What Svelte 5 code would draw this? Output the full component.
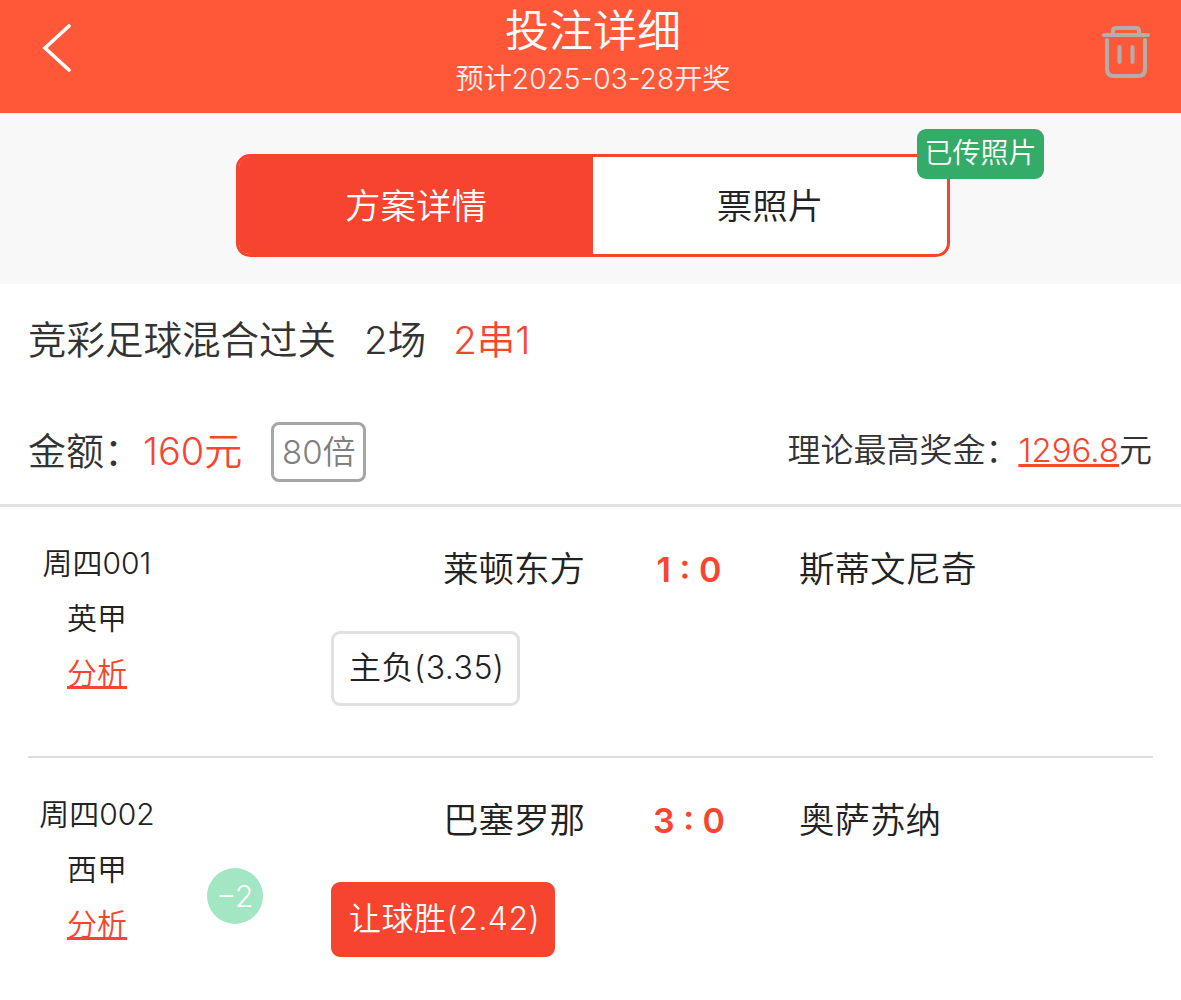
<script>
  const matches = [
    { no: '周四001', league: '英甲', home: '莱顿东方', score: '1 : 0', away: '斯蒂文尼奇', pick: '主负(3.35)', won: false, handicap: null },
    { no: '周四002', league: '西甲', home: '巴塞罗那', score: '3 : 0', away: '奥萨苏纳', pick: '让球胜(2.42)', won: true, handicap: '−2' }
  ];
</script>

<div class="page">
  <header class="topbar">
    <svg class="back" width="30" height="48" viewBox="0 0 30 48" aria-label="返回">
      <path d="M27 2 L3 24 L27 46" fill="none" stroke="#fff" stroke-width="3.6" stroke-linecap="round" stroke-linejoin="miter" />
    </svg>
    <div class="heading">
      <div class="title">投注详细</div>
      <div class="subtitle">预计2025-03-28开奖</div>
    </div>
    <svg class="trash" width="48" height="54" viewBox="0 0 48 54" aria-label="删除">
      <g fill="none" stroke="#b3adab" stroke-width="4" stroke-linecap="round">
        <path d="M2 10 H46" />
        <path d="M11 9 V6 Q11 3 14 3 H34 Q37 3 37 6 V9" />
        <path d="M5 15 V44 Q5 51 12 51 H36 Q43 51 43 44 V15" />
        <path d="M17.5 22 V37" />
        <path d="M30.5 22 V37" />
      </g>
    </svg>
  </header>

  <section class="tabs-wrap">
    <div class="tabs">
      <div class="tab active">方案详情</div>
      <div class="tab">票照片</div>
      <span class="badge">已传照片</span>
    </div>
  </section>

  <section class="summary">
    <div class="play">
      <span>竞彩足球混合过关</span>
      <span class="count">2场</span>
      <span class="red">2串1</span>
    </div>
    <div class="amount">
      <span class="label">金额：</span>
      <span class="red money">160元</span>
      <span class="times">80倍</span>
      <span class="prize">理论最高奖金：<u class="red">1296.8</u>元</span>
    </div>
  </section>

  {#each matches as m, i}
    <div class="match" class:first={i === 0}>
      <div class="info">
        <div>{m.no}</div>
        <div>{m.league}</div>
        <a class="link" href="#analysis">分析</a>
      </div>
      <div class="detail">
        <div class="teams">
          <span class="home">{m.home}</span>
          <span class="score">{m.score}</span>
          <span class="away">{m.away}</span>
        </div>
        <div class="pick" class:won={m.won}>{m.pick}</div>
      </div>
      {#if m.handicap}
        <span class="handicap">{m.handicap}</span>
      {/if}
    </div>
  {/each}
</div>

<style>
  :global(body) {
    margin: 0;
    background: #fff;
  }

  .page {
    width: 1181px;
    height: 1000px;
    overflow: hidden;
    font-family: Inter, "Noto Sans CJK SC", sans-serif;
    font-weight: 350;
    color: #333;
  }

  .red {
    color: #f7452f;
  }

  .topbar {
    height: 113px;
    background: #ff5839;
    display: flex;
    align-items: flex-start;
    justify-content: space-between;
    padding: 0 31px 0 42px;
    box-sizing: border-box;
  }

  .back {
    margin-top: 24px;
  }

  .trash {
    margin-top: 25px;
  }

  .heading {
    color: #fff;
    text-align: center;
    margin-left: 12px;
  }

  .title {
    font-size: 44px;
    line-height: 62px;
  }

  .subtitle {
    font-size: 28.2px;
    line-height: 34px;
    opacity: 0.92;
  }

  .tabs-wrap {
    height: 171px;
    background: #f8f8f8;
    padding-top: 41px;
    padding-left: 236px;
    box-sizing: border-box;
  }

  .tabs {
    position: relative;
    width: 714px;
    height: 103px;
    box-sizing: border-box;
    display: flex;
    background: #fff;
    border: 3px solid #f6442e;
    border-radius: 14px;
  }

  .tab {
    flex: 1;
    display: flex;
    align-items: center;
    justify-content: center;
    font-size: 35.5px;
    color: #222;
    padding-bottom: 4px;
    box-sizing: border-box;
  }

  .tab.active {
    flex: 0 0 354px;
    background: #f6442e;
    color: #fff;
    border-radius: 10px 0 0 10px;
  }

  .badge {
    position: absolute;
    left: 678px;
    top: -28px;
    width: 127px;
    height: 50px;
    border-radius: 9px;
    background: #34ab66;
    color: #fff;
    font-size: 28px;
    line-height: 49px;
    text-align: center;
  }

  .summary {
    padding: 0 28px;
    height: 220px;
    border-bottom: 3px solid #e2e2e2;
  }

  .play {
    display: flex;
    align-items: center;
    height: 106px;
    font-size: 38.5px;
  }

  .play .count {
    margin-left: 28px;
  }

  .play .red {
    margin-left: 27px;
  }

  .amount {
    display: flex;
    align-items: center;
    height: 60px;
    margin-top: 32px;
    font-size: 38px;
  }

  .label,
  .money,
  .prize {
    margin-bottom: 8px;
  }

  .money {
    font-size: 38px;
    margin-right: 29px;
  }

  .label {
    width: 115px;
    white-space: nowrap;
  }

  .times {
    width: 95px;
    height: 60px;
    box-sizing: border-box;
    border: 3px solid #a6a6a6;
    border-radius: 8px;
    color: #808080;
    font-size: 33px;
    line-height: 54px;
    text-align: center;
  }

  .prize {
    margin-left: auto;
    font-size: 33px;
    margin-right: 1px;
  }

  .match {
    position: relative;
    display: flex;
    height: 251px;
    margin: 0 28px;
    box-sizing: border-box;
    border-bottom: 2px solid #dcdcdc;
    color: #222;
  }

  .match:last-child {
    border-bottom: none;
  }

  .info {
    width: 138px;
    flex: none;
    padding-top: 29px;
    text-align: center;
    font-size: 30px;
    line-height: 55px;
    white-space: nowrap;
  }

  .link {
    display: block;
    color: #f7452f;
    text-decoration: underline;
  }

  .detail {
    flex: 1;
    padding-top: 36px;
  }

  .teams {
    display: flex;
    font-size: 35.5px;
    line-height: 54px;
  }

  .home {
    width: 419px;
    text-align: right;
  }

  .score {
    width: 208px;
    text-align: center;
    color: #f7452f;
    font-weight: 600;
    font-size: 34px;
  }

  .away {
    margin-left: 6px;
  }

  .pick {
    display: inline-block;
    margin-left: 165px;
    margin-top: 34px;
    height: 75px;
    box-sizing: border-box;
    padding: 0 12px 0 15px;
    border: 3px solid #e0e0e0;
    border-radius: 9px;
    font-size: 32px;
    letter-spacing: 0.5px;
    line-height: 67px;
    white-space: nowrap;
  }

  .pick.won {
    background: #f6442e;
    border-color: #f6442e;
    color: #fff;
  }

  .handicap {
    position: absolute;
    left: 179px;
    top: 110px;
    width: 56px;
    height: 56px;
    border-radius: 50%;
    background: #a3e6c3;
    color: #fff;
    font-size: 30px;
    line-height: 57px;
    text-align: center;
  }
</style>
